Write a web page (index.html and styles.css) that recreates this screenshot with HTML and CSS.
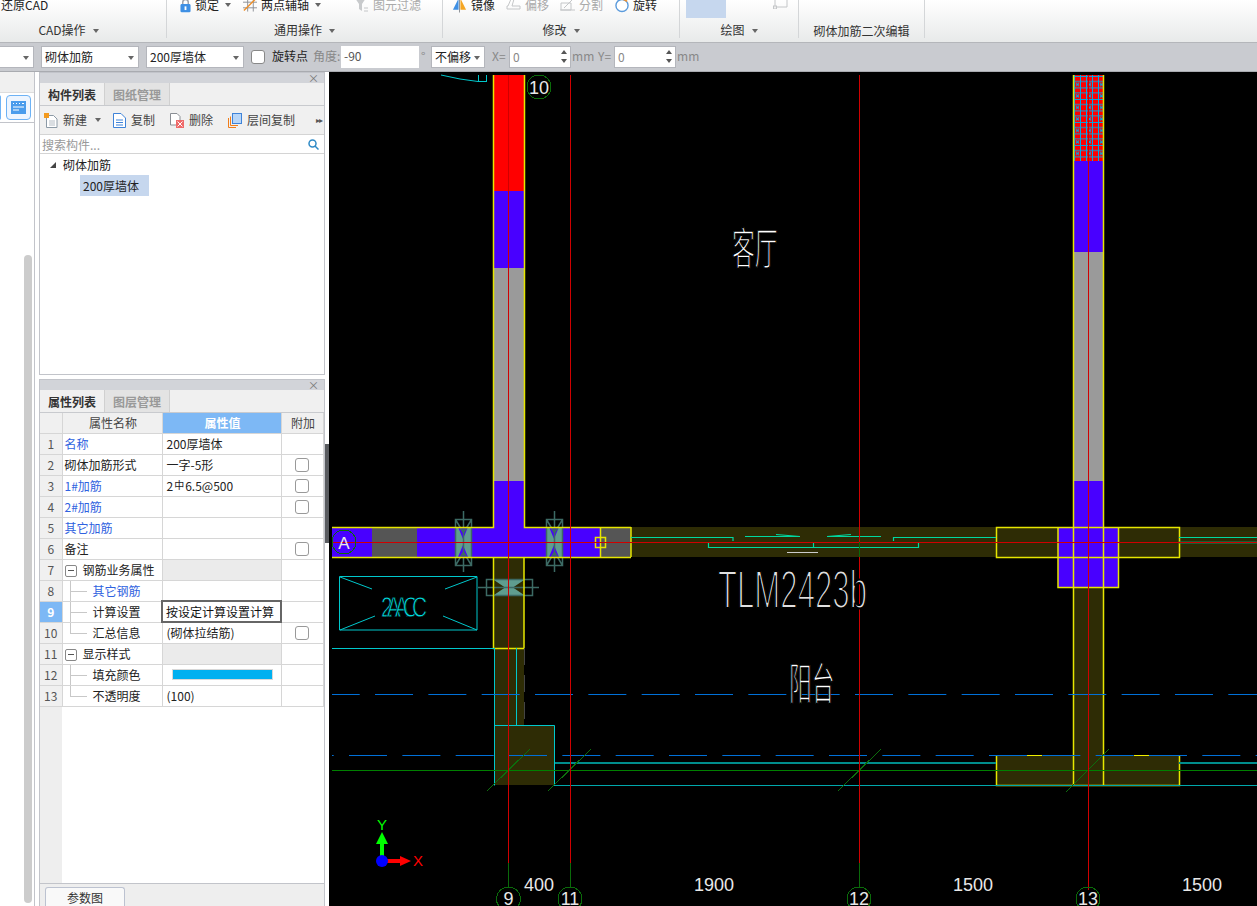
FILE: index.html
```html
<!DOCTYPE html>
<html lang="zh-CN">
<head>
    <meta charset="UTF-8">
    <title>砌体加筋</title>
    <link rel="stylesheet" href="styles.css">
</head>
<body>
    <!-- ribbon, top of it is cut off in the shot -->
    <div class="ribbon">
        <div class="rib-group g-cad">
            <div class="rib-row"><span>还原CAD</span></div>
            <div class="rib-label">CAD操作<i class="caret"></i></div>
        </div>
        <div class="rib-group g-common">
            <div class="rib-row">
                <span class="rib-item">
                    <svg width="11" height="16" viewBox="0 0 12 16"><path class="lock-arc" d="M3 8V5a3 3 0 0 1 6 0v3"/><rect class="lock-body" x="0.5" y="7" width="11" height="9" rx="1.5"/><rect class="lock-key" x="5" y="9.5" width="2" height="4"/></svg>
                    锁定<i class="caret"></i>
                </span>
                <span class="rib-item">
                    <svg width="14" height="14" viewBox="0 0 15 14"><path class="ico-grey" d="M0 4H15M0 10H15M5 0V14M11 0V14"/><path class="ico-orange" d="M1 13L13 1"/></svg>
                    两点辅轴<i class="caret"></i>
                </span>
                <span class="rib-item off">
                    <svg width="14" height="14" viewBox="0 0 14 14"><path class="ico-off-fill" d="M0 0H11L7 6V13L4 11V6Z"/><path class="ico-off" d="M9 10H13M9 13H13"/></svg>
                    图元过滤
                </span>
            </div>
            <div class="rib-label">通用操作<i class="caret"></i></div>
        </div>
        <div class="rib-group g-edit">
            <div class="rib-row">
                <span class="rib-item">
                    <svg width="15" height="16" viewBox="0 0 16 16"><path class="ico-blue-fill" d="M7 1V13H1Z"/><path class="ico-orange-fill" d="M9 1V13H15Z"/><path class="ico-grey" d="M8 0V16"/></svg>
                    镜像
                </span>
                <span class="rib-item off">
                    <svg width="15" height="14" viewBox="0 0 15 14"><path class="ico-off" d="M1 11H14V8H6L8 1H5L2 8H1Z"/></svg>
                    偏移
                </span>
                <span class="rib-item off">
                    <svg width="15" height="14" viewBox="0 0 15 14"><path class="ico-off" d="M1 5H11V12H1ZM4 10L13 1M0 12H15"/></svg>
                    分割
                </span>
                <span class="rib-item">
                    <svg width="14" height="15" viewBox="0 0 15 15"><circle class="ico-ring" cx="7.5" cy="7.5" r="6.5"/><path class="ico-orange" d="M9 1L13 3"/></svg>
                    旋转
                </span>
            </div>
            <div class="rib-label">修改<i class="caret"></i></div>
        </div>
        <div class="rib-group g-draw">
            <div class="rib-row">
                <span class="draw-swatch"></span>
                <svg class="draw-rect" width="16" height="12" viewBox="0 0 16 12"><path class="ico-off" d="M2 1H14V10H2Z"/><rect class="ico-off-handle" x="12.5" y="-1" width="3" height="3"/><rect class="ico-off-handle" x="0.5" y="9" width="3" height="3"/></svg>
            </div>
            <div class="rib-label">绘图<i class="caret"></i></div>
        </div>
        <div class="rib-group g-second">
            <div class="rib-row"></div>
            <div class="rib-label lower">砌体加筋二次编辑</div>
        </div>
    </div>

    <div class="toolbar">
        <div class="select s-cut"><i class="caret"></i></div>
        <div class="select s-wide">砌体加筋<i class="caret"></i></div>
        <div class="select s-wide">200厚墙体<i class="caret"></i></div>
        <span class="check"></span>
        <span class="tb-text">旋转点</span>
        <span class="tb-text muted angle-label">角度:</span>
        <div class="field f-angle">-90</div>
        <span class="tb-text muted degree">°</span>
        <div class="select s-offset">不偏移<i class="caret"></i></div>
        <span class="tb-text muted xy-label">X=</span>
        <div class="field f-num">0<span class="spin"><i></i><i></i></span></div>
        <span class="tb-text muted unit">mm</span>
        <span class="tb-text muted y-label">Y=</span>
        <div class="field f-num">0<span class="spin"><i></i><i></i></span></div>
        <span class="tb-text muted unit">mm</span>
    </div>

    <div class="workspace">
        <div class="side-rail">
            <div class="rail-top"></div>
            <div class="rail-icons">
                <span class="rail-btn cut"></span>
                <span class="rail-btn">
                    <svg width="15" height="13" viewBox="0 0 15 13"><rect class="rail-ico" width="15" height="13"/><path class="rail-ico-line" d="M2 2.5H3M5 2.5H6M8 2.5H9M11 2.5H13M2 6H13M2 9H8"/></svg>
                </span>
            </div>
            <div class="rail-scroll"></div>
        </div>

        <div class="panels">
            <div class="panel panel-list">
                <div class="panel-title"><span class="close">×</span></div>
                <div class="tabs">
                    <span class="tab active">构件列表</span>
                    <span class="tab">图纸管理</span>
                </div>
                <div class="list-tools">
                    <span class="tool t-new">
                        <svg width="14" height="15" viewBox="0 0 14 15"><path class="doc" d="M2.5 2.5H9.5L13 6V14.5H2.5Z"/><path class="doc-line" d="M5 8H11M5 10H11M5 12H11"/><rect class="doc-star" width="5" height="5"/></svg>
                        新建<i class="caret"></i>
                    </span>
                    <span class="tool t-copy">
                        <svg width="13" height="15" viewBox="0 0 13 15"><path class="doc-blue" d="M.5.5H8L12.5 5V14.5H.5Z"/><path class="doc-blue-line" d="M3 7H10M3 9.5H10M3 12H10"/></svg>
                        复制
                    </span>
                    <span class="tool t-del">
                        <svg width="14" height="15" viewBox="0 0 14 15"><path class="doc-grey" d="M.5.5H7L10 3.5V12H.5Z"/><rect class="del-box" x="6" y="7" width="8" height="8"/><path class="del-x" d="M7.5 8.500L12.500 13.500M12.500 8.500L7.500 13.500"/></svg>
                        删除
                    </span>
                    <span class="tool t-floor">
                        <svg width="14" height="15" viewBox="0 0 14 15"><path class="floor-o" d="M.5 5V14.500H8M2.500 3.500V12.500H10"/><rect class="floor-b" x="4.500" y=".5" width="9" height="10"/></svg>
                        层间复制
                    </span>
                    <span class="more">▸▸</span>
                </div>
                <div class="search">
                    <span>搜索构件...</span>
                    <svg width="11" height="11" viewBox="0 0 11 11"><circle class="mag" cx="4.500" cy="4.500" r="3.500"/><path class="mag" d="M7 7L10.500 10.500"/></svg>
                </div>
                <div class="tree">
                    <div class="tree-root"><i class="tree-arrow"></i>砌体加筋</div>
                    <div class="tree-leaf">200厚墙体</div>
                </div>
            </div>

            <div class="panel panel-props">
                <div class="panel-title"><span class="close">×</span></div>
                <div class="tabs">
                    <span class="tab active">属性列表</span>
                    <span class="tab">图层管理</span>
                </div>
                <div class="props-body">
                    <table class="props">
                        <colgroup><col class="c-no"><col class="c-name"><col class="c-val"><col class="c-add"></colgroup>
                        <tr class="head"><th></th><th>属性名称</th><th class="picked">属性值</th><th>附加</th></tr>
                        <tr><td class="no">1</td><td class="link">名称</td><td>200厚墙体</td><td></td></tr>
                        <tr><td class="no">2</td><td>砌体加筋形式</td><td>一字-5形</td><td class="add"><span class="check"></span></td></tr>
                        <tr><td class="no">3</td><td class="link">1#加筋</td><td>2<span class="rebar">中</span>6.5@500</td><td class="add"><span class="check"></span></td></tr>
                        <tr><td class="no">4</td><td class="link">2#加筋</td><td></td><td class="add"><span class="check"></span></td></tr>
                        <tr><td class="no">5</td><td class="link">其它加筋</td><td></td><td></td></tr>
                        <tr><td class="no">6</td><td>备注</td><td></td><td class="add"><span class="check"></span></td></tr>
                        <tr><td class="no">7</td><td class="group"><span class="minus"></span>钢筋业务属性</td><td class="shade"></td><td></td></tr>
                        <tr><td class="no">8</td><td class="child link">其它钢筋</td><td></td><td></td></tr>
                        <tr><td class="no now">9</td><td class="child">计算设置</td><td class="editing">按设定计算设置计算</td><td></td></tr>
                        <tr><td class="no">10</td><td class="child last">汇总信息</td><td>(砌体拉结筋)</td><td class="add"><span class="check"></span></td></tr>
                        <tr><td class="no">11</td><td class="group"><span class="minus"></span>显示样式</td><td class="shade"></td><td></td></tr>
                        <tr><td class="no">12</td><td class="child">填充颜色</td><td><span class="fill-bar"></span></td><td></td></tr>
                        <tr><td class="no">13</td><td class="child last">不透明度</td><td>(100)</td><td></td></tr>
                    </table>
                </div>
                <div class="bottom-tabs"><span class="bottom-tab">参数图</span></div>
            </div>
        </div>

        <div class="splitter"><span class="split-grip"></span></div>

        <div class="canvas">
            <svg width="928" height="834" viewBox="329 72 928 834">
                <defs>
                    <pattern id="hatch" width="12" height="11.500" patternUnits="userSpaceOnUse" x="1073" y="75">
                        <rect width="12" height="11.500" fill="#ff0000"/>
                        <path d="M1.500 0V11.500M7.500 0V11.500M0 1.500H12M0 6.500H12M3 8L6 11M6 8L3 11" stroke="#00a8e8" stroke-width="1" fill="none"/>
                    </pattern>
                </defs>

                <!-- olive wall fills -->
                <g class="olive">
                    <rect x="631" y="527" width="626" height="30"/>
                    <rect x="494" y="557" width="30" height="168"/>
                    <rect x="494" y="725" width="61" height="60"/>
                    <rect x="1073" y="587" width="30" height="198"/>
                    <rect x="996" y="755" width="183" height="30"/>
                </g>

                <!-- left wall, top to bottom -->
                <rect class="red" x="494" y="75" width="30" height="116"/>
                <rect class="blue" x="494" y="191" width="30" height="77"/>
                <rect class="grey" x="494" y="268" width="30" height="213"/>
                <rect class="blue" x="494" y="481" width="30" height="46"/>
                <!-- band along axis A -->
                <rect class="blue" x="332" y="527" width="268" height="30"/>
                <rect class="dark" x="372" y="527" width="45" height="30"/>
                <rect class="dark" x="600" y="527" width="31" height="30"/>
                <!-- right wall -->
                <rect x="1073" y="75" width="30" height="86" fill="url(#hatch)"/>
                <rect class="blue" x="1073" y="161" width="30" height="91"/>
                <rect class="grey" x="1073" y="252" width="30" height="229"/>
                <rect class="blue" x="1073" y="481" width="30" height="106"/>
                <rect class="blue" x="1058" y="527" width="60" height="60"/>

                <!-- cross marks on the band -->
                <g class="mark">
                    <rect class="mark-fill" x="455" y="527" width="16" height="30"/>
                    <rect class="mark-fill" x="546" y="527" width="16" height="30"/>
                    <rect class="mark-fill" x="494" y="580" width="30" height="15"/>
                    <path class="blue" d="M458 527H468L463 539ZM458 557H468L463 545ZM549 527H559L554 539ZM549 557H559L554 545Z"/>
                    <path class="olive-tip" d="M494 580V595L505 587.500ZM524 580V595L513 587.500Z"/>
                    <path class="mark-line" d="M455.500 519.500H471.500V565.500H455.500ZM463.500 511V572M455.500 519.500L463.500 533L471.500 519.500M455.500 565.500L463.500 552L471.500 565.500"/>
                    <path class="mark-line" d="M546.500 519.500H562.500V565.500H546.500ZM554.500 511V572M546.500 519.500L554.500 533L562.500 519.500M546.500 565.500L554.500 552L562.500 565.500"/>
                    <path class="mark-line" d="M486.500 579.500H532.500V595.500H486.500ZM478 587.500H539"/>
                </g>

                <!-- yellow wall edges -->
                <g class="yellow">
                    <path d="M493.500 75V527.500H332M524.500 75V527.500H631M332 557.500H631M600.500 527V557M631 527V557M493.500 557V648.500H524V557"/>
                    <path d="M996.500 527.500H1179.500V557.500H996.500ZM1058 527.500V587.500H1118.500V527.500"/>
                    <path d="M1073.500 75V785M1103.500 75V785M996.500 755V785.500H1179.500V755"/>
                    <rect x="595.500" y="537.500" width="10" height="10"/>
                </g>

                <!-- cyan lines -->
                <g class="cyan">
                    <path d="M332 648.500H494M494.500 648V785.500M516.500 648V725M494 725.500H554.500V785.500"/>
                    <path class="thin" d="M554 785.500H1257"/>
                    <path class="thick" d="M555 763H996M1179 763H1257"/>
                    <path d="M1179 770.500H1257"/>
                    <path d="M339.500 576.500H477V630H339.500ZM340 577L372 589M477 577L445 589M340 630L375 616M477 630L443 616"/>
                    <path d="M441 75L460 79L478 81.500H487M478.500 75V81M486.500 75V81"/>
                </g>

                <!-- door in the band -->
                <g class="door">
                    <path d="M631 537.500H733V541M708.500 542V547.500H918.500V542M813.500 542V547M893.500 541V537.500H996M745 536.500H800M776 534.500L800 536.500M827 536.500H881M851 534.500L827 536.500M1179 537.500H1257"/>
                </g>
                <path class="door-sill" d="M787 552.500H818"/>
                <path class="teal-line" d="M1179 542.500H1257"/>
                <path class="dash-grey" d="M524.500 648V725"/>

                <!-- dashed blue lines and the bits over them -->
                <path class="dash-a" d="M332 694.500H1257"/>
                <path class="dash-b" d="M332 755.500H1257"/>
                <path class="bit-yellow" d="M1027 755.500H1042M1134 755.500H1149"/>

                <!-- green lines -->
                <path class="green" d="M332 770.500H1257"/>
                <path class="tick" d="M487 791L530 749M548 791L591 749M838 791L881 749M1066 792L1109 749"/>

                <!-- axis lines -->
                <path class="axis" d="M508.500 75V863M570.500 75V863M859.500 75V863M1088.500 75V890M332 542.500H1257"/>
                <path class="axis-end" d="M508.500 863V888M570.500 863V888M859.500 863V888M859.500 542V557"/>

                <!-- axis bubbles -->
                <g class="bubble">
                    <circle cx="539" cy="87" r="12"/>
                    <circle cx="344" cy="542" r="12"/>
                    <circle cx="508.500" cy="899" r="12"/>
                    <circle cx="570" cy="899" r="12"/>
                    <circle cx="859" cy="899" r="12"/>
                    <circle cx="1088" cy="899" r="12"/>
                </g>
                <g class="label">
                    <text x="539" y="94">10</text>
                    <text x="344" y="549" class="small">A</text>
                    <text x="508.500" y="905">9</text>
                    <text x="570" y="905">11</text>
                    <text x="859" y="905">12</text>
                    <text x="1088" y="905">13</text>
                    <text x="539" y="891">400</text>
                    <text x="714" y="891">1900</text>
                    <text x="973" y="891">1500</text>
                    <text x="1202" y="891">1500</text>
                </g>

                <!-- drawing text -->
                <text class="cad-cn" transform="translate(732 265) scale(.52 1)">客厅</text>
                <text class="cad-cn" transform="translate(789 700) scale(.52 1)">阳台</text>
                <text class="cad-en" x="718" y="608" textLength="149" lengthAdjust="spacingAndGlyphs">TLM2423b</text>
                <text class="cad-ac" transform="translate(381 617) scale(.7 1)" textLength="66" lengthAdjust="spacing">2AACC</text>

                <!-- ucs -->
                <rect class="ucs-y" x="380" y="842" width="4" height="18"/>
                <path class="ucs-y" d="M376 844L382 832L388 844Z"/>
                <rect class="ucs-x" x="382" y="859" width="22" height="4"/>
                <path class="ucs-x" d="M400 856L411 861L400 866Z"/>
                <circle class="ucs-o" cx="382" cy="861" r="6"/>
                <text class="ucs-ty" x="382" y="830">Y</text>
                <text class="ucs-tx" x="418" y="866">X</text>
            </svg>
        </div>
    </div>
</body>
</html>
```

FILE: styles.css
```css
* {
    box-sizing: border-box;
}
html, body {
    margin: 0;
    padding: 0;
}
body {
    width: 1257px;
    height: 906px;
    overflow: hidden;
    background: #fff;
    color: #222;
    font-family: "Noto Sans CJK SC", "Liberation Sans", sans-serif;
    font-size: 12px;
    line-height: 16px;
}
.caret {
    display: inline-block;
    width: 0;
    height: 0;
    margin-left: 7px;
    border-left: 3.5px solid transparent;
    border-right: 3.5px solid transparent;
    border-top: 4px solid #666;
    vertical-align: 2px;
}

/* ribbon */
.ribbon {
    display: flex;
    height: 43px;
    overflow: hidden;
    background: linear-gradient(#ffffff, #e8eaea);
    border-bottom: 1px solid #b4b6ba;
}
.rib-group {
    display: flex;
    flex-direction: column;
    justify-content: space-between;
    height: 38px;
    border-right: 1px solid #d4d6d8;
}
.rib-row {
    display: grid;
    grid-auto-flow: column;
    justify-content: start;
    align-items: center;
    height: 16px;
    margin-top: -3px;
    white-space: nowrap;
}
.rib-item {
    display: flex;
    align-items: center;
    gap: 4px;
}
.rib-item .caret {
    margin-left: 2px;
}
.rib-item.off {
    color: #aaa;
}
.rib-label {
    text-align: center;
    color: #333;
}
.rib-label.lower {
    position: relative;
    top: 1px;
}
.g-cad {
    width: 167px;
}
.g-cad .rib-row {
    padding-left: 1px;
}
.g-cad .rib-label {
    padding-right: 29px;
}
.g-common {
    width: 276px;
}
.g-common .rib-row {
    padding-left: 13px;
    grid-template-columns: 63px 112px auto;
}
.g-edit {
    width: 237px;
}
.g-edit .rib-row {
    padding-left: 9px;
    grid-template-columns: 54px 54px 55px auto;
}
.g-draw {
    width: 119px;
}
.g-draw .rib-row {
    padding-left: 6px;
    grid-template-columns: 87px auto;
    height: 20px;
    margin-top: -3px;
}
.g-draw .rib-label {
    margin-top: -7px;
}
.draw-swatch {
    display: block;
    width: 40px;
    height: 20px;
    background: #c6d7ee;
}
.draw-rect {
    margin-bottom: 10px;
}
.g-second {
    width: 126px;
}
.lock-arc { fill: none; stroke: #9a9ea6; stroke-width: 1.5; }
.lock-body { fill: #3f90e4; }
.lock-key { fill: #fff; }
.ico-grey { fill: none; stroke: #8a8e94; }
.ico-orange { fill: none; stroke: #f0902a; stroke-width: 1.5; }
.ico-off { fill: none; stroke: #c4c6c8; }
.ico-off-fill { fill: #c8cacc; }
.ico-off-handle { fill: #eee; stroke: #c4c6c8; }
.ico-blue-fill { fill: #3f90e4; }
.ico-orange-fill { fill: #f5a623; }
.ico-ring { fill: #fff; stroke: #5b9bdc; stroke-width: 1.5; }

/* option bar */
.toolbar {
    display: flex;
    align-items: center;
    gap: 7px;
    height: 29px;
    padding-left: 0;
    background: #c9cbd0;
    border-bottom: 1px solid #a9abb0;
    white-space: nowrap;
}
.select, .field {
    position: relative;
    flex: none;
    height: 22px;
    padding: 1px 3px;
    background: #fff;
    border: 1px solid #b4b6bc;
    line-height: 17px;
}
.select .caret {
    position: absolute;
    right: 4px;
    top: 9px;
    border-left-width: 3px;
    border-right-width: 3px;
}
.s-cut {
    width: 44px;
    margin-left: -10px;
}
.s-wide {
    width: 98px;
}
.s-offset {
    width: 54px;
    margin-left: -3px;
}
.f-angle {
    width: 78px;
    margin-left: -6px;
    border: 0;
    color: #555;
    line-height: 18px;
    padding-left: 3px;
}
.f-num {
    width: 62px;
    color: #888;
    margin-left: -6px;
}
.spin {
    position: absolute;
    right: 3px;
    top: 3px;
    display: flex;
    flex-direction: column;
    gap: 5px;
}
.spin i {
    width: 0;
    height: 0;
    border-left: 3px solid transparent;
    border-right: 3px solid transparent;
    border-bottom: 4px solid #555;
}
.spin i + i {
    border-bottom: 0;
    border-top: 4px solid #555;
}
.check {
    display: block;
    flex: none;
    width: 14px;
    height: 14px;
    background: #fff;
    border: 1px solid #888;
    border-radius: 3px;
}
.tb-text {
    flex: none;
    margin-top: -2px;
}
.tb-text.muted {
    color: #888;
}
.angle-label {
    margin-left: -2px;
    width: 27px;
}
.degree {
    margin-left: -5px;
    width: 6px;
}
.xy-label {
    margin-left: 0;
    width: 16px;
}
.unit {
    margin-left: -6px;
    width: 21px;
}
.y-label {
    margin-left: -2px;
    width: 15px;
}

/* main area */
.workspace {
    display: flex;
    height: 834px;
}
.side-rail {
    position: relative;
    flex: none;
    width: 35px;
    border-right: 1px solid #c2c4ca;
}
.rail-top {
    height: 21px;
    background: #f0f0f0;
    border-bottom: 1px solid #ddd;
}
.rail-icons {
    display: flex;
    justify-content: flex-end;
    align-items: center;
    gap: 5px;
    height: 30px;
    padding-right: 3px;
    border-bottom: 1px solid #c2c4ca;
}
.rail-btn {
    display: flex;
    flex: none;
    align-items: center;
    justify-content: center;
    width: 25px;
    height: 25px;
    background: #edf5ff;
    border: 1px solid #6db2f5;
    border-radius: 4px;
}
.rail-btn.cut {
    width: 2px;
    border-left: 0;
    border-radius: 0 4px 4px 0;
}
.rail-ico { fill: #4a9cec; }
.rail-ico-line { fill: none; stroke: #fff; }
.rail-scroll {
    position: absolute;
    left: 24px;
    top: 183px;
    width: 8px;
    height: 648px;
    background: #ccc;
    border-radius: 4px;
}
.panels {
    display: flex;
    flex: none;
    flex-direction: column;
    gap: 4px;
    width: 286px;
    margin-left: 4px;
}
.panel {
    display: flex;
    flex-direction: column;
    background: #fff;
    border: 1px solid #c2c4ca;
}
.panel-list {
    height: 303px;
}
.panel-props {
    flex: 1;
    min-height: 0;
    border-bottom: 0;
}
.panel-title {
    flex: none;
    height: 10px;
    padding-right: 5px;
    background: #d2d4d9;
    color: #777;
    font-size: 11px;
    line-height: 10px;
    text-align: right;
}
.tabs {
    display: flex;
    flex: none;
    height: 23px;
    background: #f0f0f0;
    border-bottom: 1px solid #c8cace;
}
.tab {
    width: 65px;
    height: 22px;
    background: #e3e3e3;
    border-right: 1px solid #d0d0d0;
    color: #999;
    font-weight: 700;
    line-height: 23px;
    text-align: center;
}
.tab.active {
    background: #f0f0f0;
    color: #333;
}
.list-tools {
    display: flex;
    flex: none;
    align-items: center;
    height: 29px;
    padding-left: 4px;
    background: #f0f0f0;
    border-bottom: 1px solid #d4d4d4;
    color: #444;
}
.tool {
    display: flex;
    flex: none;
    align-items: center;
    gap: 5px;
}
.tool .caret {
    margin-left: 3px;
    border-left-width: 3px;
    border-right-width: 3px;
}
.t-new { width: 69px; }
.t-copy { width: 57px; }
.t-del { width: 58px; }
.t-floor { width: 88px; }
.more {
    color: #555;
    font-size: 8px;
    letter-spacing: -1px;
}
.doc { fill: #fff; stroke: #8c9aa6; }
.doc-line { fill: none; stroke: #b4bcc4; }
.doc-star { fill: #f39a1e; }
.doc-blue { fill: #fff; stroke: #3f83d8; }
.doc-blue-line { fill: none; stroke: #3f83d8; }
.doc-grey { fill: #fff; stroke: #8a8e94; }
.del-box { fill: #ef6a6a; }
.del-x { fill: none; stroke: #fff; }
.floor-o { fill: none; stroke: #f07d1a; }
.floor-b { fill: #b8d6f8; stroke: #3f83d8; }
.mag { fill: none; stroke: #2f8ac6; stroke-width: 1.500; }
.search {
    display: flex;
    flex: none;
    align-items: center;
    justify-content: space-between;
    height: 19px;
    padding: 1px 5px 0 2px;
    border-bottom: 1px solid #d4d4d4;
    color: #999;
}
.tree {
    flex: 1;
    padding-top: 1px;
}
.tree-root {
    position: relative;
    height: 20px;
    padding-left: 23px;
    line-height: 20px;
}
.tree-arrow {
    position: absolute;
    left: 10px;
    top: 7px;
    width: 0;
    height: 0;
    border-left: 6px solid transparent;
    border-bottom: 6px solid #444;
}
.tree-leaf {
    width: 69px;
    height: 21px;
    margin-left: 40px;
    padding-left: 3px;
    background: #c6d7ee;
    line-height: 21px;
}

/* property grid */
.props-body {
    flex: 1;
    min-height: 0;
    background: linear-gradient(90deg, #eee 22px, #fff 22px);
    border-bottom: 1px solid #c2c4ca;
}
.props {
    width: 283px;
    table-layout: fixed;
    border-collapse: collapse;
    background: #fff;
}
.c-no { width: 22px; }
.c-name { width: 100px; }
.c-val { width: 119px; }
.c-add { width: 42px; }
.props tr {
    height: 21px;
}
.props tr.head, .props tr.head th {
    height: 20px;
}
.props th, .props td {
    height: 21px;
    padding: 0 0 0 2px;
    border: 1px solid #d6d6d6;
    font-weight: 400;
    line-height: 16px;
    white-space: nowrap;
    overflow: hidden;
}
.props td:nth-child(3) {
    padding-left: 4px;
}
.props tr:first-child th {
    border-top: 0;
}
.props th:first-child, .props td:first-child {
    border-left: 0;
}
.props th {
    background: #f0f0f0;
    color: #444;
    text-align: center;
}
.props th.picked {
    background: #7db8f5;
    color: #fff;
    font-weight: 700;
}
.props td.no {
    padding: 0;
    background: #f0f0f0;
    color: #555;
    text-align: center;
}
.props td.no.now {
    background: #7db8f5;
    color: #fff;
    font-weight: 700;
}
.props td.link {
    color: #2f62e0;
}
.props td.shade {
    background: #ebebeb;
}
.props td.add {
    padding: 0;
}
.add .check {
    margin: 0 auto;
    border-color: #999;
}
.props td.editing {
    border: 2px solid #666;
    padding-left: 3px;
    color: #111;
}
.rebar {
    margin: 0 1px;
    font-size: 10px;
    vertical-align: 2px;
}
.fill-bar {
    display: block;
    width: 101px;
    height: 11px;
    margin-left: 5px;
    background: #00b0f0;
    border: 1px solid #d8d8d8;
}
.minus {
    position: relative;
    display: inline-block;
    width: 12px;
    height: 12px;
    margin-right: 6px;
    border: 1px solid #888;
    border-radius: 2px;
    vertical-align: -2px;
}
.minus::after {
    content: "";
    position: absolute;
    left: 2px;
    top: 4px;
    width: 6px;
    height: 1px;
    background: #555;
}
.props td.child {
    position: relative;
    padding-left: 30px;
}
/* tree connectors in the name column */
.props td.child::before {
    content: "";
    position: absolute;
    left: 7px;
    top: 0;
    bottom: 0;
    width: 1px;
    background: #c8c8c8;
}
.props td.child::after {
    content: "";
    position: absolute;
    left: 7px;
    top: 10px;
    width: 17px;
    height: 1px;
    background: #c8c8c8;
}
.props td.child.last::before {
    bottom: 10px;
}
.bottom-tabs {
    flex: none;
    height: 22px;
    padding: 3px 0 0 5px;
    background: #eee;
}
.bottom-tab {
    display: block;
    width: 80px;
    height: 19px;
    background: #f9f9f9;
    border: 1px solid #bcc2d0;
    border-bottom: 0;
    border-radius: 3px 3px 0 0;
    color: #333;
    line-height: 19px;
    text-align: center;
}
.splitter {
    position: relative;
    flex: none;
    width: 4px;
}
.split-grip {
    position: absolute;
    left: 0;
    top: 372px;
    width: 4px;
    height: 99px;
    background: #5a5c60;
}

/* drawing */
.canvas {
    flex: 1;
    background: #000;
}
.canvas svg {
    display: block;
}
.olive rect { fill: #2e2c05; }
.red { fill: #ff0000; }
.blue { fill: #4800ff; }
.grey { fill: #9a9a9a; }
.dark { fill: #555; }
.mark-fill { fill: #5f9d8f; }
.olive-tip { fill: #2e2c05; }
.mark-line { fill: none; stroke: #3c6a64; stroke-width: 1.500; }
.yellow { fill: none; stroke: #e6e600; stroke-width: 1.500; }
.cyan { fill: none; stroke: #00c8cc; }
.cyan .thin { stroke: #00a8ac; }
.cyan .thick { stroke: #008c8c; stroke-width: 2; }
.door { fill: none; stroke: #00d8a0; stroke-width: 1.200; }
.door-sill { fill: none; stroke: #ccc; }
.teal-line { fill: none; stroke: #009060; stroke-width: 2; }
.dash-grey { fill: none; stroke: #444; stroke-dasharray: 17 10; }
.dash-a, .dash-b { fill: none; stroke: #0070d8; stroke-dasharray: 38 15.330; }
.dash-a { stroke-dashoffset: 10.300; }
.dash-b { stroke-dashoffset: 36.300; }
.bit-yellow { fill: none; stroke: #f0f000; }
.green { fill: none; stroke: #008000; }
.tick { fill: none; stroke: #0d6d0d; shape-rendering: crispEdges; }
.axis { fill: none; stroke: #d00000; }
.axis-end { fill: none; stroke: #0a6a0a; }
.bubble circle { fill: none; stroke: #0a6a0a; shape-rendering: crispEdges; }
.label text {
    fill: #e8e8e8;
    font-family: "Liberation Sans", sans-serif;
    font-size: 18px;
    text-anchor: middle;
}
.label .small {
    font-size: 17px;
}
.cad-cn {
    fill: #fff;
    stroke: #000;
    stroke-width: 1.600;
    paint-order: fill;
    font-family: "Noto Sans CJK SC", sans-serif;
    font-size: 44px;
}
.cad-en {
    fill: #e0e0e0;
    stroke: #000;
    stroke-width: 2.200;
    font-family: "Liberation Sans", sans-serif;
    font-size: 53px;
}
.cad-ac {
    fill: #00d8dc;
    stroke: #000;
    stroke-width: .800;
    font-family: "Liberation Sans", sans-serif;
    font-size: 30px;
}
.ucs-y { fill: #00ff00; }
.ucs-x { fill: #ff0000; }
.ucs-o { fill: #0000ff; }
.ucs-ty, .ucs-tx {
    font-family: "Liberation Sans", sans-serif;
    font-size: 15px;
    text-anchor: middle;
}
.ucs-ty { fill: #00ff00; }
.ucs-tx { fill: #ff0000; }
```
